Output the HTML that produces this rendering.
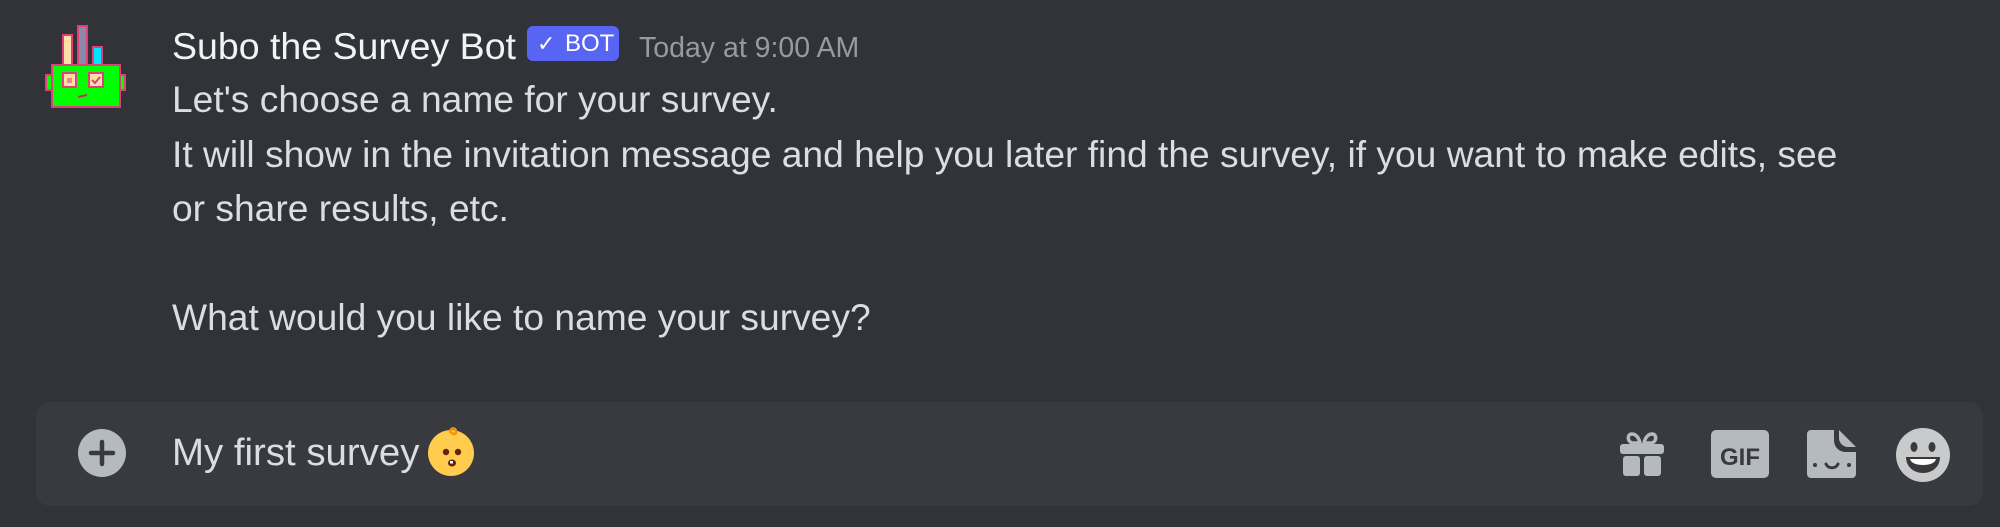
<!DOCTYPE html>
<html><head><meta charset="utf-8"><style>
html,body{margin:0;padding:0;width:2000px;height:527px;background:#313338;overflow:hidden;font-family:"Liberation Sans",sans-serif;}
.abs{position:absolute;white-space:nowrap}
.name{left:172px;top:24px;font-size:37.5px;color:#f2f3f5;line-height:44px;font-weight:500}
.badge{left:527px;top:26px;width:92px;height:35px;background:#5865f2;border-radius:6px;color:#fff;font-size:24px;line-height:35px}
.ts{left:639px;top:30px;font-size:28.5px;color:#949ba4;line-height:36px}
.body{left:172px;top:72px;font-size:37.2px;color:#dbdee1;line-height:54.5px;white-space:pre}
.box{left:36px;top:402px;width:1947px;height:104px;background:#383a40;border-radius:14px}
.inp{left:172px;top:428px;font-size:38.4px;color:#dbdee1;line-height:44px;display:flex;align-items:center}
</style></head><body>
<svg class="abs" style="left:40px;top:15px" width="100" height="100" viewBox="40 15 100 100">
<g stroke="#e0407a" stroke-width="2">
<rect x="63" y="35" width="9" height="30" fill="#fde0a8"/>
<rect x="78" y="26" width="9" height="39" fill="#8a8aa8"/>
<rect x="93" y="47" width="9" height="18" fill="#00e5ff"/>
<rect x="46" y="75" width="6" height="15" fill="#00ff00"/>
<rect x="120" y="75" width="5" height="15" fill="#00ff00"/>
<rect x="52" y="65" width="68" height="42" fill="#00ff00"/>
<rect x="63" y="73" width="13" height="14" fill="#fde0a8"/>
<rect x="89" y="73" width="14" height="14" fill="#fde0a8"/>
</g>
<rect x="67" y="78" width="5" height="5" fill="#e88"/>
<path d="M92 80l3 3 5-6" stroke="#e0407a" stroke-width="2" fill="none"/>
<path d="M78 97l9-2" stroke="#c0306a" stroke-width="2"/>
</svg>
<div class="abs name">Subo the Survey Bot</div>
<div class="abs badge"><span style="position:absolute;left:10px;font-size:22px">✓</span><span style="position:absolute;left:38px">BOT</span></div>
<div class="abs ts">Today at 9:00 AM</div>
<div class="abs body">Let's choose a name for your survey.
It will show in the invitation message and help you later find the survey, if you want to make edits, see
or share results, etc.

What would you like to name your survey?</div>
<div class="abs box"></div>
<svg class="abs" style="left:78px;top:429px" width="48" height="48" viewBox="0 0 48 48"><circle cx="24" cy="24" r="24" fill="#b5bac1"/><path d="M24 13v22M13 24h22" stroke="#383a40" stroke-width="4.5" stroke-linecap="round"/></svg>
<div class="abs inp"><span>My first survey</span><svg style="margin-left:5px;margin-top:-4px" width="54" height="54" viewBox="0 0 54 54"><circle cx="27" cy="29" r="23" fill="#ffcc4d"/><circle cx="22" cy="28" r="3.2" fill="#662113"/><circle cx="34" cy="28" r="3.2" fill="#662113"/><ellipse cx="28" cy="39" rx="4" ry="3.5" fill="#662113"/><rect x="26" y="37" width="3" height="2.5" fill="#fff"/><path d="M27 9c-3-4 4-7 5-2 1 4-4 4-4 1" stroke="#f4900c" stroke-width="2.5" fill="none"/></svg></div>
<svg class="abs" style="left:1616px;top:428px" width="52" height="52" viewBox="0 0 52 52" fill="#b5bac1"><path d="M16 6c-5 0-5 7 0 9h8c-1-5-4-9-8-9zM36 6c5 0 5 7 0 9h-8c1-5 4-9 8-9z" fill="none" stroke="#b5bac1" stroke-width="3.5"/><rect x="4" y="16" width="44" height="10" rx="3"/><rect x="7" y="28" width="17" height="20" rx="3"/><rect x="28" y="28" width="17" height="20" rx="3"/></svg>
<svg class="abs" style="left:1710px;top:428px" width="60" height="52" viewBox="0 0 60 52"><rect x="1" y="2" width="58" height="48" rx="5" fill="#b5bac1"/><text x="30" y="37" text-anchor="middle" font-family="Liberation Sans" font-weight="bold" font-size="24" fill="#383a40">GIF</text></svg>
<svg class="abs" style="left:1806px;top:428px" width="52" height="52" viewBox="0 0 52 52"><path d="M5 2h23v10c0 8 6 12 12 12h10v22a4 4 0 0 1-4 4H5a4 4 0 0 1-4-4V6a4 4 0 0 1 4-4z" fill="#b5bac1"/><path d="M33 2l17 17H42c-5 0-9-4-9-9z" fill="#b5bac1"/><circle cx="9" cy="37" r="2" fill="#383a40"/><circle cx="43" cy="37" r="2" fill="#383a40"/><path d="M20 36c2 5 10 5 12 0" stroke="#383a40" stroke-width="3" fill="none" stroke-linecap="round"/></svg>
<svg class="abs" style="left:1895px;top:427px" width="56" height="56" viewBox="0 0 56 56"><circle cx="28" cy="28" r="27" fill="#c9cacc"/><ellipse cx="19" cy="20" rx="3.5" ry="5" fill="#3a3a3a"/><ellipse cx="37" cy="20" rx="3.5" ry="5" fill="#3a3a3a"/><path d="M11 30h34c0 10-8 16-17 16S11 40 11 30z" fill="#3a3a3a"/><path d="M15 32h26c-1 4-6 6-13 6s-12-2-13-6z" fill="#fff"/></svg>
</body></html>
